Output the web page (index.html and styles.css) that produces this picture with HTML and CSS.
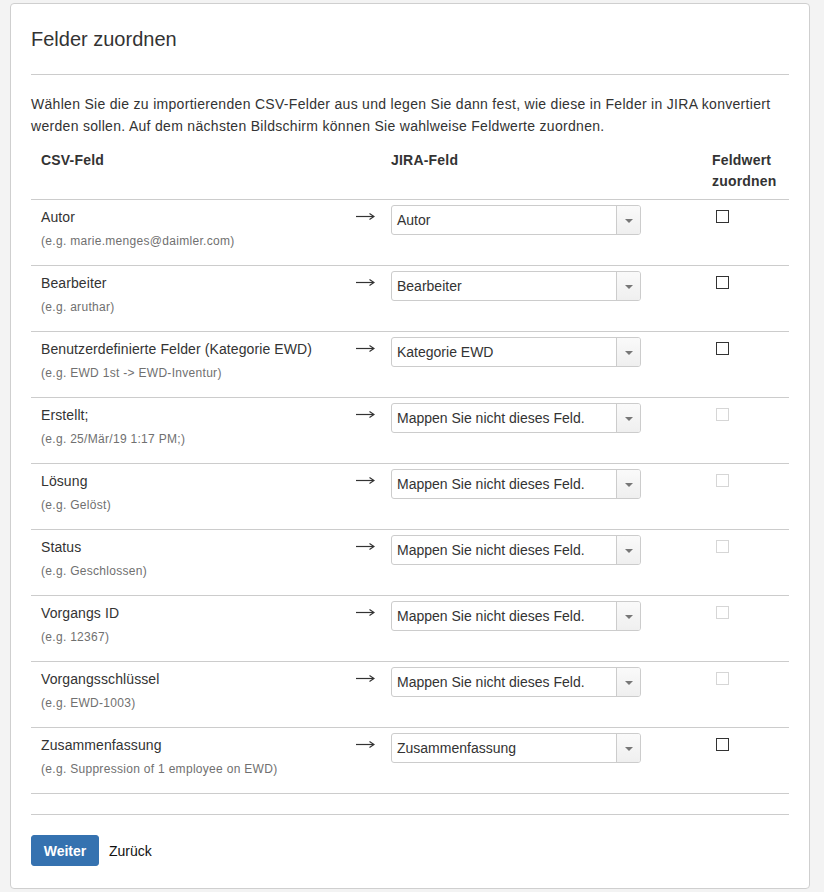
FILE: index.html
```html
<!DOCTYPE html>
<html lang="de">
<head>
<meta charset="utf-8">
<title>Felder zuordnen</title>
<link rel="stylesheet" href="styles.css">
</head>
<body>
<div class="card">
  <h2 class="title">Felder zuordnen</h2>
  <hr class="rule">
  <p class="intro">Wählen Sie die zu importierenden CSV-Felder aus und legen Sie dann fest, wie diese in Felder in JIRA konvertiert werden sollen. Auf dem nächsten Bildschirm können Sie wahlweise Feldwerte zuordnen.</p>
  <table class="map">
    <colgroup>
      <col class="c1"><col class="c2"><col class="c3"><col class="c4">
    </colgroup>
    <thead>
      <tr><th>CSV-Feld</th><th></th><th>JIRA-Feld</th><th>Feldwert zuordnen</th></tr>
    </thead>
    <tbody>
      <tr>
        <td><div class="name">Autor</div><div class="ex">(e.g. marie.menges@daimler.com)</div></td>
        <td class="arr"><svg width="19" height="9" viewBox="0 0 19 9"><path d="M0 4.5H17.5" stroke="#333" stroke-width="1.2"/><path d="M13.5 1.5L18 4.5L13.5 7.5" fill="none" stroke="#333" stroke-width="1.2"/></svg></td>
        <td class="sel"><div class="select"><span class="val">Autor</span><span class="trig"><i></i></span></div></td>
        <td class="chk"><input type="checkbox"></td>
      </tr>
      <tr>
        <td><div class="name">Bearbeiter</div><div class="ex">(e.g. aruthar)</div></td>
        <td class="arr"><svg width="19" height="9" viewBox="0 0 19 9"><path d="M0 4.5H17.5" stroke="#333" stroke-width="1.2"/><path d="M13.5 1.5L18 4.5L13.5 7.5" fill="none" stroke="#333" stroke-width="1.2"/></svg></td>
        <td class="sel"><div class="select"><span class="val">Bearbeiter</span><span class="trig"><i></i></span></div></td>
        <td class="chk"><input type="checkbox"></td>
      </tr>
      <tr>
        <td><div class="name">Benutzerdefinierte Felder (Kategorie EWD)</div><div class="ex">(e.g. EWD 1st -&gt; EWD-Inventur)</div></td>
        <td class="arr"><svg width="19" height="9" viewBox="0 0 19 9"><path d="M0 4.5H17.5" stroke="#333" stroke-width="1.2"/><path d="M13.5 1.5L18 4.5L13.5 7.5" fill="none" stroke="#333" stroke-width="1.2"/></svg></td>
        <td class="sel"><div class="select"><span class="val">Kategorie EWD</span><span class="trig"><i></i></span></div></td>
        <td class="chk"><input type="checkbox"></td>
      </tr>
      <tr>
        <td><div class="name">Erstellt;</div><div class="ex">(e.g. 25/Mär/19 1:17 PM;)</div></td>
        <td class="arr"><svg width="19" height="9" viewBox="0 0 19 9"><path d="M0 4.5H17.5" stroke="#333" stroke-width="1.2"/><path d="M13.5 1.5L18 4.5L13.5 7.5" fill="none" stroke="#333" stroke-width="1.2"/></svg></td>
        <td class="sel"><div class="select"><span class="val">Mappen Sie nicht dieses Feld.</span><span class="trig"><i></i></span></div></td>
        <td class="chk"><input type="checkbox" disabled></td>
      </tr>
      <tr>
        <td><div class="name">Lösung</div><div class="ex">(e.g. Gelöst)</div></td>
        <td class="arr"><svg width="19" height="9" viewBox="0 0 19 9"><path d="M0 4.5H17.5" stroke="#333" stroke-width="1.2"/><path d="M13.5 1.5L18 4.5L13.5 7.5" fill="none" stroke="#333" stroke-width="1.2"/></svg></td>
        <td class="sel"><div class="select"><span class="val">Mappen Sie nicht dieses Feld.</span><span class="trig"><i></i></span></div></td>
        <td class="chk"><input type="checkbox" disabled></td>
      </tr>
      <tr>
        <td><div class="name">Status</div><div class="ex">(e.g. Geschlossen)</div></td>
        <td class="arr"><svg width="19" height="9" viewBox="0 0 19 9"><path d="M0 4.5H17.5" stroke="#333" stroke-width="1.2"/><path d="M13.5 1.5L18 4.5L13.5 7.5" fill="none" stroke="#333" stroke-width="1.2"/></svg></td>
        <td class="sel"><div class="select"><span class="val">Mappen Sie nicht dieses Feld.</span><span class="trig"><i></i></span></div></td>
        <td class="chk"><input type="checkbox" disabled></td>
      </tr>
      <tr>
        <td><div class="name">Vorgangs ID</div><div class="ex">(e.g. 12367)</div></td>
        <td class="arr"><svg width="19" height="9" viewBox="0 0 19 9"><path d="M0 4.5H17.5" stroke="#333" stroke-width="1.2"/><path d="M13.5 1.5L18 4.5L13.5 7.5" fill="none" stroke="#333" stroke-width="1.2"/></svg></td>
        <td class="sel"><div class="select"><span class="val">Mappen Sie nicht dieses Feld.</span><span class="trig"><i></i></span></div></td>
        <td class="chk"><input type="checkbox" disabled></td>
      </tr>
      <tr>
        <td><div class="name">Vorgangsschlüssel</div><div class="ex">(e.g. EWD-1003)</div></td>
        <td class="arr"><svg width="19" height="9" viewBox="0 0 19 9"><path d="M0 4.5H17.5" stroke="#333" stroke-width="1.2"/><path d="M13.5 1.5L18 4.5L13.5 7.5" fill="none" stroke="#333" stroke-width="1.2"/></svg></td>
        <td class="sel"><div class="select"><span class="val">Mappen Sie nicht dieses Feld.</span><span class="trig"><i></i></span></div></td>
        <td class="chk"><input type="checkbox" disabled></td>
      </tr>
      <tr>
        <td><div class="name">Zusammenfassung</div><div class="ex">(e.g. Suppression of 1 employee on EWD)</div></td>
        <td class="arr"><svg width="19" height="9" viewBox="0 0 19 9"><path d="M0 4.5H17.5" stroke="#333" stroke-width="1.2"/><path d="M13.5 1.5L18 4.5L13.5 7.5" fill="none" stroke="#333" stroke-width="1.2"/></svg></td>
        <td class="sel"><div class="select"><span class="val">Zusammenfassung</span><span class="trig"><i></i></span></div></td>
        <td class="chk"><input type="checkbox"></td>
      </tr>
    </tbody>
  </table>
  <hr class="rule bottom">
  <div class="actions">
    <button class="btn">Weiter</button>
    <a class="back" href="#">Zurück</a>
  </div>
</div>
</body>
</html>
```
FILE: styles.css
```css
html, body {
  margin: 0;
  padding: 0;
  background: #f3f3f3;
}
body {
  font-family: "Liberation Sans", Arial, sans-serif;
  font-size: 14px;
  color: #333;
  padding: 3px 0 0 10px;
}
.card {
  box-sizing: border-box;
  width: 800px;
  background: #fff;
  border: 1px solid #cfcfcf;
  border-radius: 4px;
  padding: 20px 20px 22px 20px;
}
.title {
  margin: 0;
  font-size: 20px;
  font-weight: normal;
  line-height: 30px;
  color: #333;
}
.rule {
  border: 0;
  border-top: 1px solid #ccc;
  margin: 20px 0 0 0;
  height: 0;
}
.intro {
  margin: 18px 0 3px 0;
  line-height: 22px;
  letter-spacing: 0.3px;
}
.map {
  width: 100%;
  border-collapse: collapse;
  table-layout: fixed;
}
.c1 { width: 315px; }
.c2 { width: 35px; }
.c3 { width: 321px; }
.c4 { width: 87px; }
.map th {
  text-align: left;
  font-weight: bold;
  line-height: 21px;
  padding: 10px 10px 7px 10px;
  vertical-align: top;
  border-bottom: 1px solid #ccc;
  letter-spacing: 0.2px;
}
.map td {
  vertical-align: top;
  padding: 7px 10px 14px 10px;
  border-bottom: 1px solid #ccc;
}
.name {
  line-height: 20px;
  letter-spacing: 0.1px;
}
.ex {
  margin-top: 4px;
  font-size: 12px;
  line-height: 20px;
  color: #707070;
  letter-spacing: 0.3px;
}
.map td.arr {
  padding-top: 12px;
  line-height: 9px;
}
.map td.sel {
  padding-top: 5px;
}
.select {
  box-sizing: border-box;
  width: 250px;
  height: 30px;
  border: 1px solid #ccc;
  border-radius: 3px;
  display: flex;
  align-items: stretch;
  background: #fff;
}
.val {
  flex: 1;
  padding-left: 5px;
  line-height: 28px;
  color: #333;
  white-space: nowrap;
  overflow: hidden;
}
.trig {
  width: 23px;
  border-left: 1px solid #ccc;
  background: linear-gradient(#fafafa, #efefef);
  border-radius: 0 2px 2px 0;
  display: flex;
  align-items: center;
  justify-content: center;
}
.trig i {
  width: 0;
  height: 0;
  border-left: 4px solid transparent;
  border-right: 4px solid transparent;
  border-top: 4px solid #777;
  margin-top: 1px;
}
.map td.chk {
  padding-top: 10px;
}
.chk input {
  -webkit-appearance: none;
  appearance: none;
  box-sizing: border-box;
  width: 13px;
  height: 13px;
  margin: 0 0 0 4px;
  border: 1px solid #333;
  border-radius: 0;
  background: #fff;
  display: block;
}
.chk input:disabled {
  border-color: #d6d6d6;
}
.rule.bottom {
  margin-top: 20px;
}
.actions {
  margin-top: 20px;
  display: flex;
  align-items: center;
  gap: 10px;
}
.btn {
  font-family: "Liberation Sans", Arial, sans-serif;
  font-size: 14px;
  font-weight: bold;
  color: #fff;
  background: #3572b0;
  border: 1px solid #3572b0;
  border-radius: 3px;
  height: 31px;
  width: 68px;
  padding: 0;
}
.back {
  color: #111;
  text-decoration: none;
  font-size: 14px;
}
```
